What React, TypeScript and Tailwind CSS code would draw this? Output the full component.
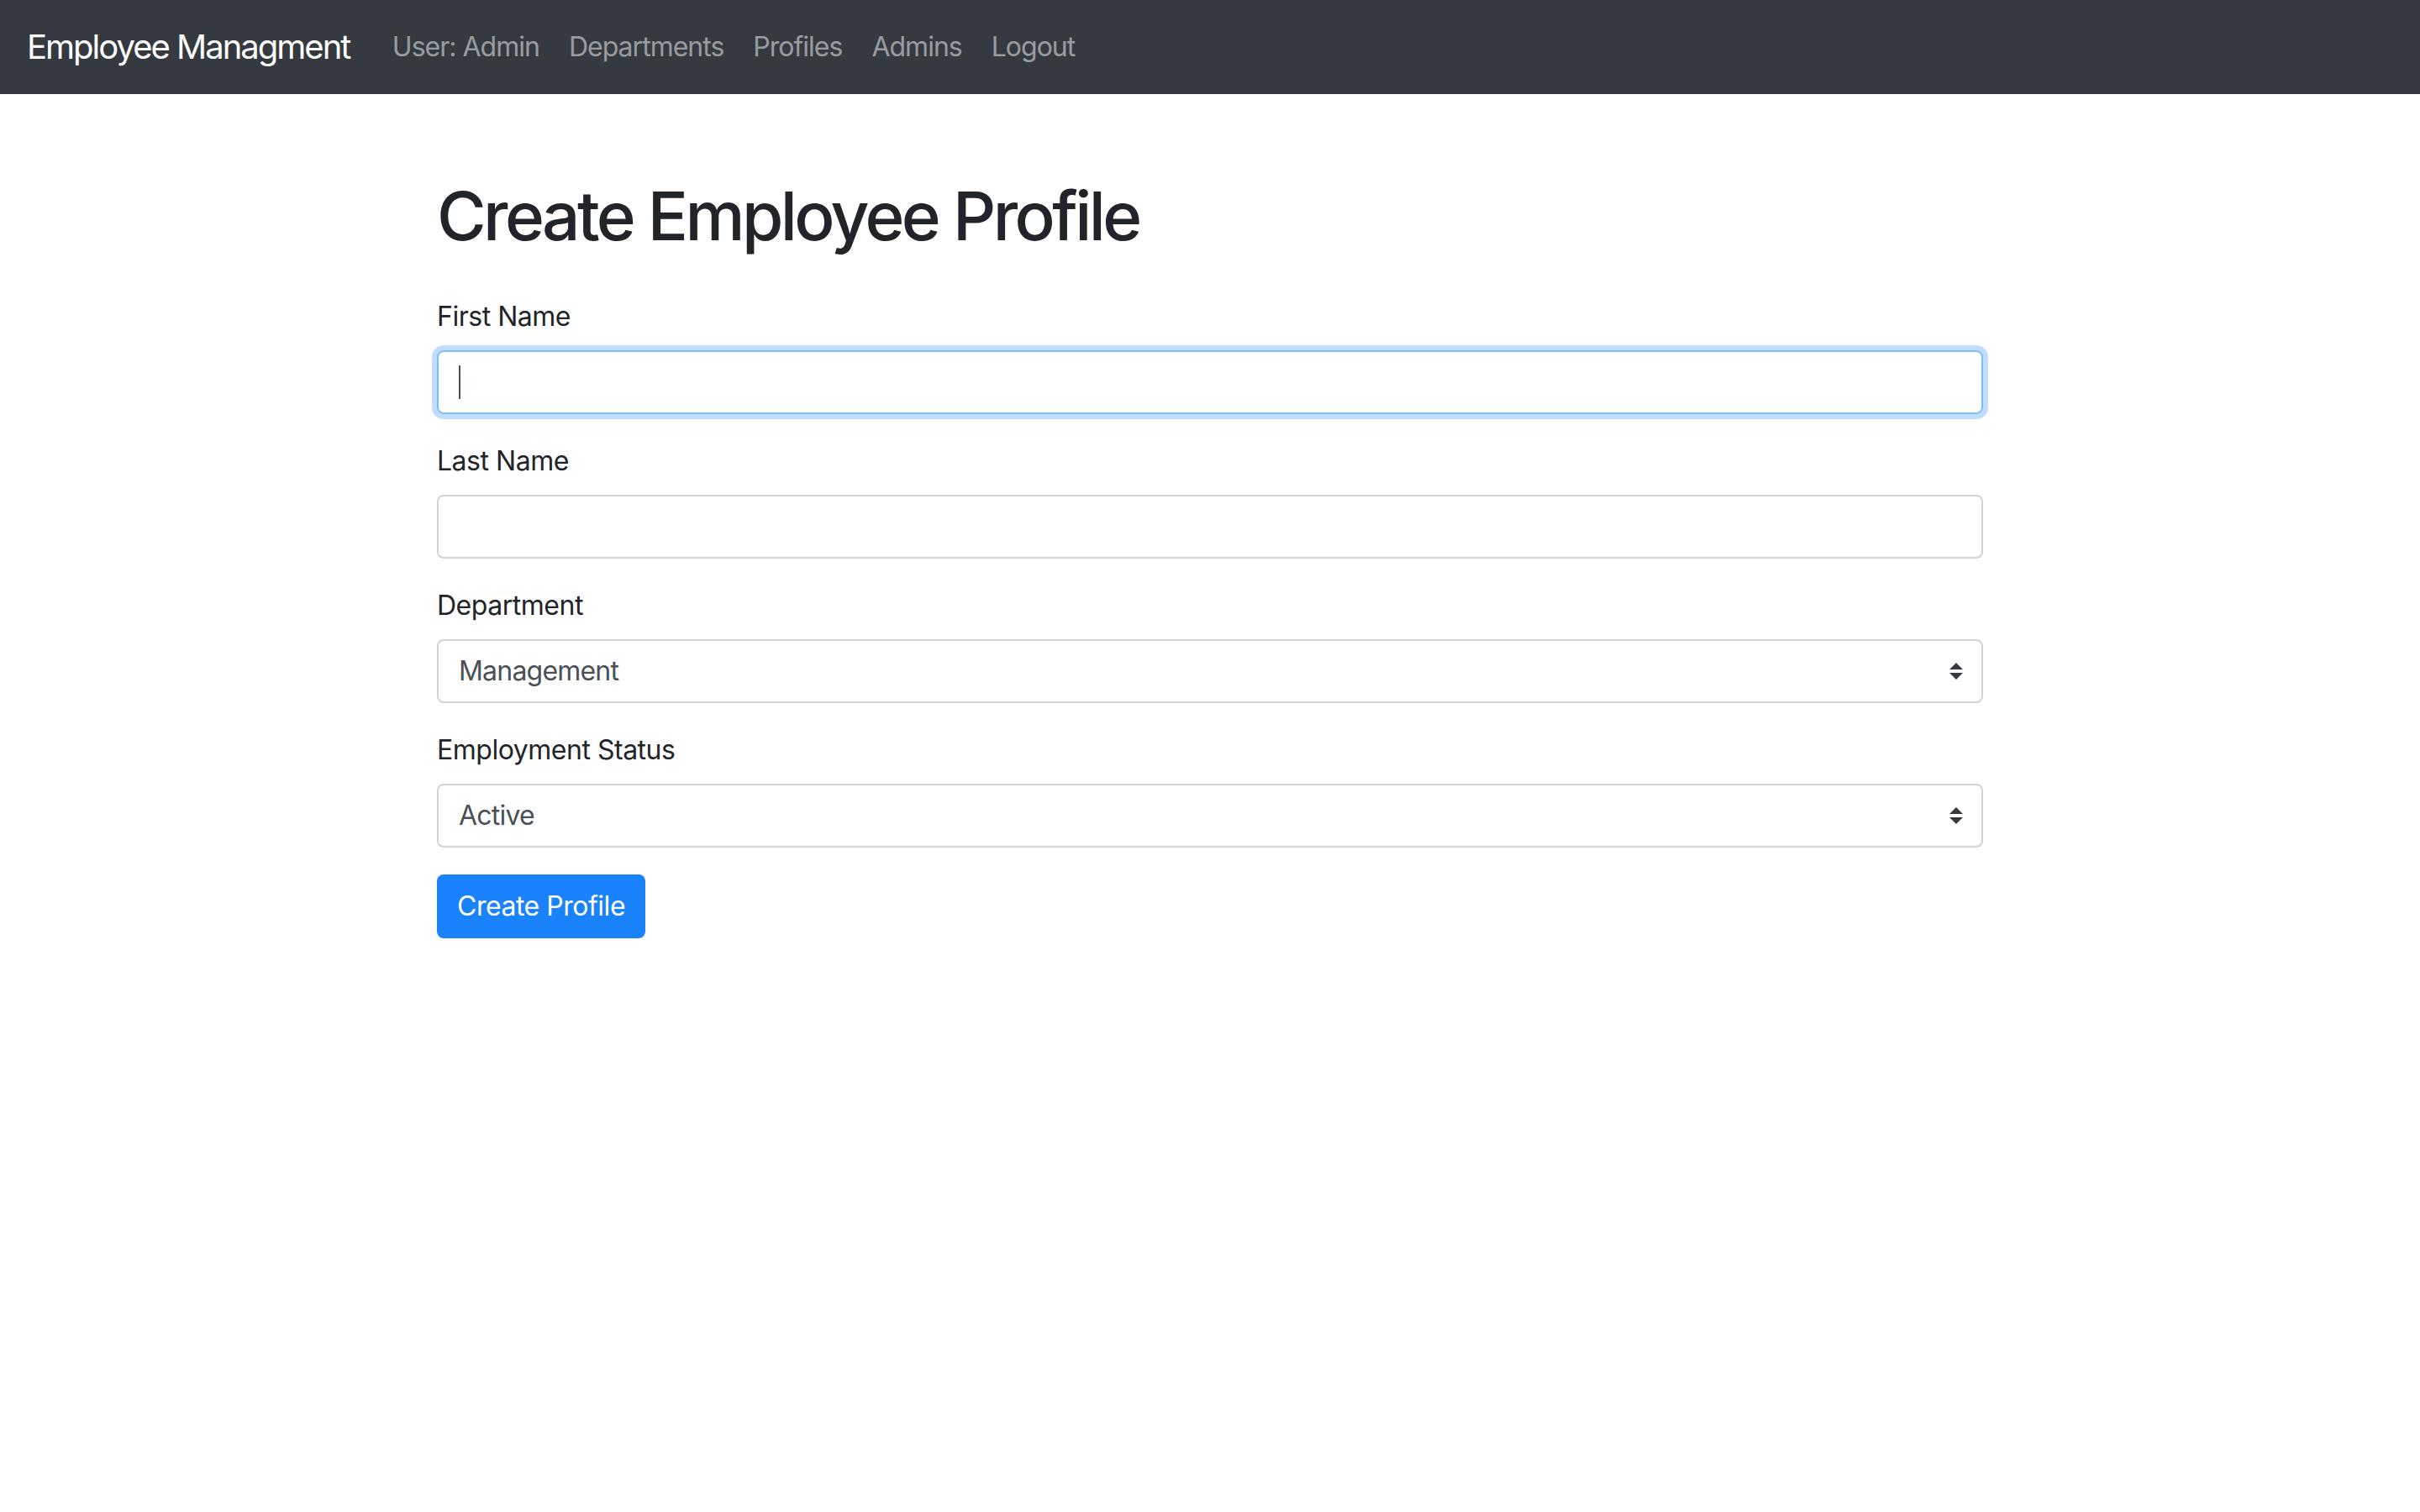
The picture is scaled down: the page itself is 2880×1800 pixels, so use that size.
import { useState } from "react";

const links = ["User: Admin", "Departments", "Profiles", "Admins", "Logout"];

function Arrows() {
  return (
    <svg viewBox="0 0 4 5" className="w-[16px] h-[20px]" fill="#343a40">
      <path d="M2 0L0 2h4zm0 5L0 3h4z" />
    </svg>
  );
}

export default function App() {
  const [form, setForm] = useState({ firstName: "", lastName: "", department: "Management", status: "Active" });

  return (
    <div className="min-h-screen bg-white text-[#212529] tracking-[-0.03em]" style={{ fontFamily: "Inter, 'Liberation Sans', sans-serif" }}>
      <nav className="h-[112px] bg-[#343a40] px-[32px] flex items-center">
        <span className="text-[40px] text-white mr-[33px] tracking-[-0.05em]">Employee Managment</span>
        {links.map(l => (
          <a key={l} className="px-[17.5px] text-[32px] text-white/50 tracking-[-0.031em]">{l}</a>
        ))}
      </nav>

      <div className="w-[1840px] mx-auto pt-[97px]">
        <h1 className="text-[80px] leading-[96px] font-medium mb-[48px] tracking-[-0.045em]">Create Employee Profile</h1>

        <form onSubmit={e => e.preventDefault()}>
          <div className="mb-[32px]">
            <label className="block text-[32px] leading-[48px] mb-[16px]">First Name</label>
            <div className="relative">
              <input value={form.firstName} onChange={e => setForm(p => ({ ...p, firstName: e.target.value }))}
                className="w-full h-[76px] border-2 border-[#80bdff] rounded-[8px] px-[24px] text-[32px] text-[#495057] outline-none shadow-[0_0_0_6px_rgba(0,123,255,0.25)]" />
              {!form.firstName && <span className="absolute left-[26px] top-[18px] w-[2px] h-[40px] bg-[#495057]" />}
            </div>
          </div>

          <div className="mb-[32px]">
            <label className="block text-[32px] leading-[48px] mb-[16px]">Last Name</label>
            <input value={form.lastName} onChange={e => setForm(p => ({ ...p, lastName: e.target.value }))}
              className="w-full h-[76px] border-2 border-[#ced4da] rounded-[8px] px-[24px] text-[32px] text-[#495057] outline-none" />
          </div>

          {[
            { key: "department", label: "Department", options: ["Management", "Engineering", "Sales"] },
            { key: "status", label: "Employment Status", options: ["Active", "Inactive"] },
          ].map(f => (
            <div key={f.key} className="mb-[32px]">
              <label className="block text-[32px] leading-[48px] mb-[16px]">{f.label}</label>
              <div className="relative">
                <select value={(form as any)[f.key]} onChange={e => setForm(p => ({ ...p, [f.key]: e.target.value }))}
                  className="w-full h-[76px] border-2 border-[#ced4da] rounded-[8px] pl-[24px] pr-[64px] text-[32px] text-[#495057] bg-white outline-none appearance-none tracking-[-0.025em]">
                  {f.options.map(o => <option key={o}>{o}</option>)}
                </select>
                <span className="absolute right-[24px] top-1/2 -translate-y-1/2 pointer-events-none flex">
                  <Arrows />
                </span>
              </div>
            </div>
          ))}

          <button type="submit" className="h-[76px] px-[24px] rounded-[8px] bg-[#1a82fb] text-white text-[32px] leading-[48px]">
            Create Profile
          </button>
        </form>
      </div>
    </div>
  );
}
